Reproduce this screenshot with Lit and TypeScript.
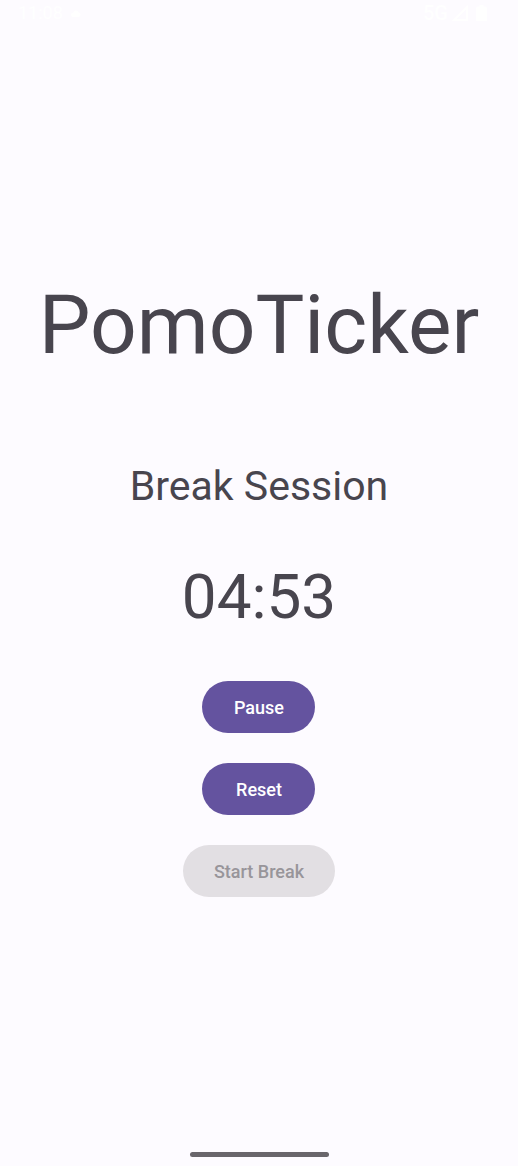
import { LitElement, html, css } from "lit";
import { customElement } from "lit/decorators.js";

@customElement("app-root")
export class AppRoot extends LitElement {
  static styles = css`
    :host {
      display: flex;
      flex-direction: column;
      min-height: 100vh;
      box-sizing: border-box;
      background: #fdfbff;
      color: #48454e;
      font-family: Roboto, sans-serif;
    }
    .status {
      display: flex;
      justify-content: space-between;
      align-items: center;
      height: 26px;
      margin-bottom: 2px;
      padding: 0 31px 0 18px;
      color: #fff;
      font-size: 18px;
      line-height: 26px;
    }
    .group {
      display: flex;
      align-items: center;
      gap: 8px;
    }
    .network {
      font-size: 20px;
      font-weight: 500;
      margin-right: -4px;
    }
    svg { display: block; }
    main {
      flex: 1;
      display: flex;
      flex-direction: column;
      align-items: center;
      justify-content: center;
      padding-bottom: 6px;
    }
    h1, h2, p { margin: 0; font-weight: 400; }
    h1 { font-size: 82px; line-height: 96px; }
    h2 { font-size: 41px; line-height: 48px; margin-top: 89px; }
    .time { font-size: 62px; line-height: 72px; margin-top: 51px; }
    .actions {
      display: flex;
      flex-direction: column;
      align-items: center;
      gap: 30px;
      margin-top: 48px;
    }
    button {
      height: 52px;
      min-width: 113px;
      padding: 2px 31px 0;
      border: 0;
      border-radius: 26px;
      background: #64539f;
      color: #fff;
      font: 500 18px/24px Roboto, sans-serif;
    }
    button:disabled { background: #e2dfe3; color: #98959a; }
    .handle {
      align-self: center;
      width: 139px;
      height: 5px;
      border-radius: 3px;
      background: #69666b;
      margin-bottom: 9px;
    }
  `;

  render() {
    return html`
      <div class="status">
        <div class="group">
          <span>11:08</span>
          <svg width="10" height="7" viewBox="0 0 10 7" aria-hidden="true">
            <path fill="currentColor" d="M2.2 7a2.1 2.1 0 0 1-.1-4.2A3 3 0 0 1 7.8 2.5 2.3 2.3 0 0 1 7.7 7z" />
          </svg>
        </div>
        <div class="group">
          <span class="network">5G</span>
          <svg width="16" height="16" viewBox="0 0 16 16" aria-hidden="true">
            <path fill="none" stroke="currentColor" stroke-width="1.8" d="M15 2v13H2z" />
          </svg>
          <svg width="11" height="16" viewBox="0 0 11 16" aria-hidden="true">
            <path fill="currentColor" d="M3.5 0h4v1.6H9a2 2 0 0 1 2 2V16H0V3.6a2 2 0 0 1 2-2h1.5z" />
          </svg>
        </div>
      </div>
      <main>
        <h1>PomoTicker</h1>
        <h2>Break Session</h2>
        <p class="time" role="timer">04:53</p>
        <div class="actions">
          <button type="button">Pause</button>
          <button type="button">Reset</button>
          <button type="button" disabled>Start Break</button>
        </div>
      </main>
      <div class="handle"></div>
    `;
  }
}
